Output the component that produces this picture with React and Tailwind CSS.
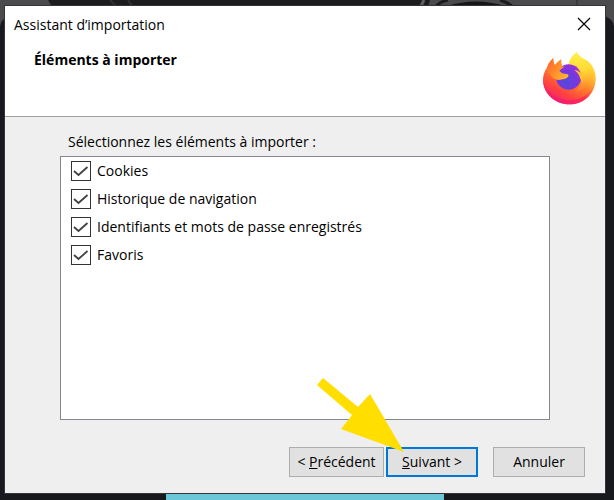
import React, { useState } from "react";

const ITEMS = [
  { id: "cookies", label: "Cookies" },
  { id: "history", label: "Historique de navigation" },
  { id: "logins", label: "Identifiants et mots de passe enregistrés" },
  { id: "bookmarks", label: "Favoris" },
];

const FirefoxLogo = () => (
  <svg viewBox="18 12 162 168" className="w-[54px] h-14" aria-hidden="true">
    <defs>
      <linearGradient id="body" x1="0.85" y1="0.05" x2="0.3" y2="1">
        <stop offset="0.05" stopColor="#fff44f" />
        <stop offset="0.3" stopColor="#ffc02e" />
        <stop offset="0.55" stopColor="#ff7a2c" />
        <stop offset="0.8" stopColor="#ff4040" />
        <stop offset="1" stopColor="#f0207a" />
      </linearGradient>
      <linearGradient id="rim" x1="0.2" y1="1" x2="1" y2="0.1">
        <stop offset="0" stopColor="#f01878" />
        <stop offset="0.5" stopColor="#ff3050" />
        <stop offset="1" stopColor="#ffa030" stopOpacity="0" />
      </linearGradient>
      <radialGradient id="globe" cx="0.4" cy="0.7" r="0.7">
        <stop offset="0" stopColor="#5548dc" />
        <stop offset="0.6" stopColor="#7638dd" />
        <stop offset="1" stopColor="#9a2fe0" />
      </radialGradient>
      <linearGradient id="flame" x1="0.4" y1="0" x2="0.6" y2="1">
        <stop offset="0" stopColor="#fff04a" />
        <stop offset="0.5" stopColor="#ffd836" />
        <stop offset="1" stopColor="#ff8a2a" stopOpacity="0.3" />
      </linearGradient>
      <linearGradient id="head" x1="0" y1="0" x2="1" y2="0.7">
        <stop offset="0" stopColor="#ff5a35" />
        <stop offset="0.5" stopColor="#ff8a2b" />
        <stop offset="1" stopColor="#ffb52e" />
      </linearGradient>
    </defs>
    <path
      d="M52 39C40 50 36 59 34 66C25 78 21 92 21 106C23 148 58 178 100 178C144 178 177 145 179 104C180 82 173 65 160 53C154 44 133 42 122 22C108 32 100 46 97 60C90 60 84 62 79 64C75 56 75 49 76 43C69 48 62 54 57 61C53 53 51 46 52 39Z"
      fill="url(#body)"
    />
    <path
      d="M21 106C23 148 58 178 100 178C144 178 177 145 179 104C170 141 142 164 103 165C63 166 32 143 21 106Z"
      fill="url(#rim)"
    />
    <path
      d="M122 22C108 32 100 46 97 60C119 60 132 76 140 93C141 111 134 128 119 139C142 136 157 121 160 98C161 86 158 77 151 67C166 79 169 94 165 112C176 94 174 66 160 53C154 44 133 42 122 22Z"
      fill="url(#flame)"
    />
    <circle cx="98" cy="96" r="38" fill="url(#globe)" />
    <path
      d="M52 39C40 50 35 61 33 70C36 83 43 90 50 98C54 100 60 103 65 105C75 104 87 102 93 98C97 95 98 92 97 89C94 87 88 87 79 85C75 82 72 79 70 77C75 73 81 69 86 64C83 63 81 64 79 65C75 56 75 49 76 43C69 48 62 54 57 61C53 53 51 46 52 39Z"
      fill="url(#head)"
    />
    <path
      d="M98 58C117 60 130 70 134 84C128 78 122 75 115 75C124 82 130 89 133 101L138 112C148 90 134 63 98 58Z"
      fill="#ffc22f"
    />
  </svg>
);

// Desktop visible around the dialog
const Backdrop = () => (
  <div className="absolute inset-0 overflow-hidden bg-[#4a4a4c]" aria-hidden="true">
    <svg viewBox="0 0 614 20" preserveAspectRatio="none" className="block w-full h-5">
      <rect width="614" height="20" fill="#4b4b4d" />
      <path d="M48 0H430L424 20H60Z" fill="#1c1c1e" />
      <path d="M110 0L130 20M128 0L132 6" stroke="#303032" strokeWidth="2" />
      <path d="M424 0L420 8" stroke="#606062" strokeWidth="3" />
      <path d="M435 7Q441 1 448 0M500 0Q509 3 513 7" stroke="#1b1b1d" strokeWidth="3" fill="none" />
      <path d="M447 6Q476-3 505 6Z" fill="#161618" />
      <path d="M577 0V6" stroke="#3a3a3c" strokeWidth="2" />
    </svg>
    <div className="absolute inset-x-0 top-4 bottom-0 rounded-t-xl bg-[#18181f]" />
    <div className="absolute bottom-0 left-[27%] right-[170px] h-[6px] bg-[#6cc8d8]" />
  </div>
);

const CheckItem = ({ item, checked, onToggle }) => (
  <li className="flex items-center gap-[6px] h-5">
    <span className="relative w-5 h-5">
      <input
        id={item.id}
        type="checkbox"
        checked={checked}
        onChange={() => onToggle(item.id)}
        className="block w-5 h-5 appearance-none border border-[#333333] bg-white"
      />
      {checked && (
        <svg viewBox="0 0 20 20" className="absolute inset-0 w-5 h-5 pointer-events-none" fill="none">
          <path d="M3 10L7.5 14L16.5 6" stroke="#404040" strokeWidth="1.7" />
        </svg>
      )}
    </span>
    <label htmlFor={item.id}>{item.label}</label>
  </li>
);

const Arrow = () => (
  <svg
    viewBox="0 0 87 74"
    className="absolute -left-[69px] -top-[69px] w-[87px] h-[74px] pointer-events-none"
    aria-hidden="true"
  >
    <path d="M6 0L0 7L35 37L24 51L87 74L53 16L41 29Z" fill="#ffde00" />
  </svg>
);

const App = () => {
  const [selected, setSelected] = useState(ITEMS.map((item) => item.id));

  const toggle = (id) => {
    setSelected((prev) => (prev.includes(id) ? prev.filter((x) => x !== id) : [...prev, id]));
  };

  return (
    <div className="relative flex min-h-screen pt-[5px] pb-[6px] pl-1 pr-2 font-['Open_Sans','Noto_Sans',sans-serif] text-[14px] leading-5 text-black">
      <Backdrop />

      <main className="relative flex flex-1 flex-col border border-[#333338] bg-[#efefef]">
        <header className="flex h-[111px] justify-between border-b border-[#a0a0a0] bg-white">
          <div className="pl-[9px] pt-[9px]">
            <h1>Assistant d’importation</h1>
            <h2 className="pl-5 pt-[15px] font-bold">Éléments à importer</h2>
          </div>
          <div className="flex flex-col items-end pr-[9px] pt-[11px]">
            <button type="button" aria-label="Fermer" className="mr-[5px]">
              <svg viewBox="0 0 14 14" className="block w-[14px] h-[14px]" fill="none" stroke="#000">
                <path d="M1 1L13 13M13 1L1 13" strokeWidth="1.2" />
              </svg>
            </button>
            <div className="pt-[18px]">
              <FirefoxLogo />
            </div>
          </div>
        </header>

        <section className="flex flex-1 flex-col pl-[55px] pr-[55px] pt-[15px]">
          <p className="pl-2">Sélectionnez les éléments à importer :</p>
          <ul className="mt-1 flex flex-1 flex-col gap-2 border border-[#828790] bg-white pl-[10px] pt-1">
            {ITEMS.map((item) => (
              <CheckItem
                key={item.id}
                item={item}
                checked={selected.includes(item.id)}
                onToggle={toggle}
              />
            ))}
          </ul>
        </section>

        <footer className="flex justify-end pr-5 pt-[27px] pb-4">
          <button type="button" className="w-[95px] h-[30px] border border-[#adadad] bg-[#e1e1e1]">
            &lt; <u>P</u>récédent
          </button>
          <div className="relative ml-[2px]">
            <button type="button" className="w-[92px] h-[30px] border-2 border-[#0078d7] bg-[#e1e1e1]">
              <u>S</u>uivant &gt;
            </button>
            <Arrow />
          </div>
          <button type="button" className="ml-[15px] w-[92px] h-[30px] border border-[#adadad] bg-[#e1e1e1]">
            Annuler
          </button>
        </footer>
      </main>
    </div>
  );
};

export default App;
